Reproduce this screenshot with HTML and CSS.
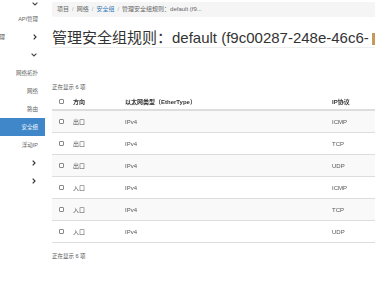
FILE: index.html
```html
<!DOCTYPE html>
<html>
<head>
<meta charset="utf-8">
<title>管理安全组规则</title>
<link rel="stylesheet" href="styles.css">
</head>
<body>

<div class="page">
  <div class="sidebar">
    <div class="navTop">
      <svg class="chevDown" width="6" height="4" viewBox="0 0 6 4"><polyline points="0.6,0.6 3,3 5.4,0.6" fill="none" stroke="#444" stroke-width="1.1"/></svg>
    </div>
    <div class="navItem"><span>API管理</span></div>
    <div class="navItem navGroup">
      <span class="clipped">管理</span>
      <svg class="chevRight" width="4" height="6" viewBox="0 0 4 6"><polyline points="0.7,0.6 3,3 0.7,5.4" fill="none" stroke="#333" stroke-width="1.2"/></svg>
    </div>
    <div class="navItem navChev">
      <svg class="chevDown" width="6" height="4" viewBox="0 0 6 4"><polyline points="0.6,0.6 3,3 5.4,0.6" fill="none" stroke="#444" stroke-width="1.1"/></svg>
    </div>
    <div class="navItem"><span>网络拓扑</span></div>
    <div class="navItem"><span>网络</span></div>
    <div class="navItem"><span>路由</span></div>
    <div class="navItem navActive"><span>安全组</span></div>
    <div class="navItem"><span>浮动IP</span></div>
    <div class="navItem navChev">
      <svg class="chevRight" width="4" height="6" viewBox="0 0 4 6"><polyline points="0.7,0.6 3,3 0.7,5.4" fill="none" stroke="#333" stroke-width="1.2"/></svg>
    </div>
    <div class="navItem navChev">
      <svg class="chevRight" width="4" height="6" viewBox="0 0 4 6"><polyline points="0.7,0.6 3,3 0.7,5.4" fill="none" stroke="#333" stroke-width="1.2"/></svg>
    </div>
  </div>

  <div class="main">
    <div class="breadcrumb">
      项目<span class="sep">/</span>网络<span class="sep">/</span><a href="#">安全组</a><span class="sep">/</span>管理安全组规则：default (f9...
    </div>

    <h1 class="pageTitle">管理安全组规则：default (f9c00287-248e-46c6-<span class="mark"></span></h1>

    <div class="count">正在显示 6 项</div>

    <div class="rules">
      <div class="row head">
        <div class="cell"><span class="check"></span></div>
        <div class="cell">方向</div>
        <div class="cell">以太网类型（EtherType）</div>
        <div class="cell">IP协议</div>
      </div>
      <div class="row odd">
        <div class="cell"><span class="check"></span></div>
        <div class="cell">出口</div>
        <div class="cell">IPv4</div>
        <div class="cell">ICMP</div>
      </div>
      <div class="row">
        <div class="cell"><span class="check"></span></div>
        <div class="cell">出口</div>
        <div class="cell">IPv4</div>
        <div class="cell">TCP</div>
      </div>
      <div class="row odd">
        <div class="cell"><span class="check"></span></div>
        <div class="cell">出口</div>
        <div class="cell">IPv4</div>
        <div class="cell">UDP</div>
      </div>
      <div class="row">
        <div class="cell"><span class="check"></span></div>
        <div class="cell">入口</div>
        <div class="cell">IPv4</div>
        <div class="cell">ICMP</div>
      </div>
      <div class="row odd">
        <div class="cell"><span class="check"></span></div>
        <div class="cell">入口</div>
        <div class="cell">IPv4</div>
        <div class="cell">TCP</div>
      </div>
      <div class="row">
        <div class="cell"><span class="check"></span></div>
        <div class="cell">入口</div>
        <div class="cell">IPv4</div>
        <div class="cell">UDP</div>
      </div>
    </div>

    <div class="count countFoot">正在显示 6 项</div>
  </div>
</div>

</body>
</html>
```

FILE: styles.css
```css
body {
  margin: 0;
  background-color: #FFFFFF;
  font-family: "Liberation Sans", "Noto Sans CJK SC", sans-serif;
  font-size: 6px;
  color: #333333;
  overflow: hidden;
}
.page {
  display: flex;
  width: 375px;
  height: 288px;
  overflow: hidden;
}

/* sidebar */
.sidebar {
  width: 45px;
  flex-shrink: 0;
  display: flex;
  flex-direction: column;
}
.navTop {
  height: 10px;
  display: flex;
  justify-content: flex-end;
  align-items: flex-start;
  padding-right: 7px;
  padding-top: 2px;
  box-sizing: border-box;
}
.navItem {
  height: 18px;
  display: flex;
  align-items: center;
  justify-content: flex-end;
  padding-right: 7px;
  color: #666666;
  font-size: 5.5px;
}
.navGroup {
  justify-content: space-between;
}
.navGroup .clipped {
  margin-left: -6px;
  color: #555555;
}
.navChev {
  padding-right: 8px;
}
.chevRight {
  margin-right: 1px;
}
.navActive {
  background-color: #3F87C9;
  color: #FFFFFF;
}

/* main */
.main {
  flex: 1;
  min-width: 0;
  padding-left: 7px;
  overflow: hidden;
}
.breadcrumb {
  margin-top: 2px;
  height: 15px;
  line-height: 15px;
  padding-left: 5px;
  background-color: #F5F5F5;
  border-radius: 2px 0 0 2px;
  color: #666666;
  font-size: 6px;
  white-space: nowrap;
}
.breadcrumb .sep {
  color: #AAAAAA;
  padding: 0 3px;
}
.breadcrumb a {
  color: #337AB7;
  text-decoration: none;
}
.pageTitle {
  margin: 12px 0 0 0;
  font-size: 15px;
  font-weight: normal;
  line-height: 18px;
  color: #333333;
  white-space: nowrap;
  border-bottom: 1px solid #EEEEEE;
}
.mark {
  display: inline-block;
  width: 3px;
  height: 12px;
  margin-left: 3px;
  vertical-align: -2px;
  background-color: #C69A5A;
}
.count {
  margin-top: 35px;
  line-height: 8px;
  font-size: 5.5px;
  color: #555555;
}
.countFoot {
  margin-top: 9px;
}

/* rules table */
.rules {
  margin-top: 2px;
  will-change: transform;
  color: #555555;
}
.row {
  display: grid;
  grid-template-columns: 21px 52px 207px 1fr;
  height: 21px;
  border-bottom: 1px solid #DDDDDD;
  align-items: center;
}
.row.head {
  height: 16px;
  border-bottom: 2px solid #DDDDDD;
  font-weight: bold;
  color: #333333;
}
.row.odd {
  background-color: #F9F9F9;
}
.cell {
  white-space: nowrap;
}
.check {
  display: block;
  width: 3px;
  height: 3px;
  margin-left: 7px;
  border: 1px solid #888888;
  border-radius: 1px;
  background-color: #FFFFFF;
}
```
